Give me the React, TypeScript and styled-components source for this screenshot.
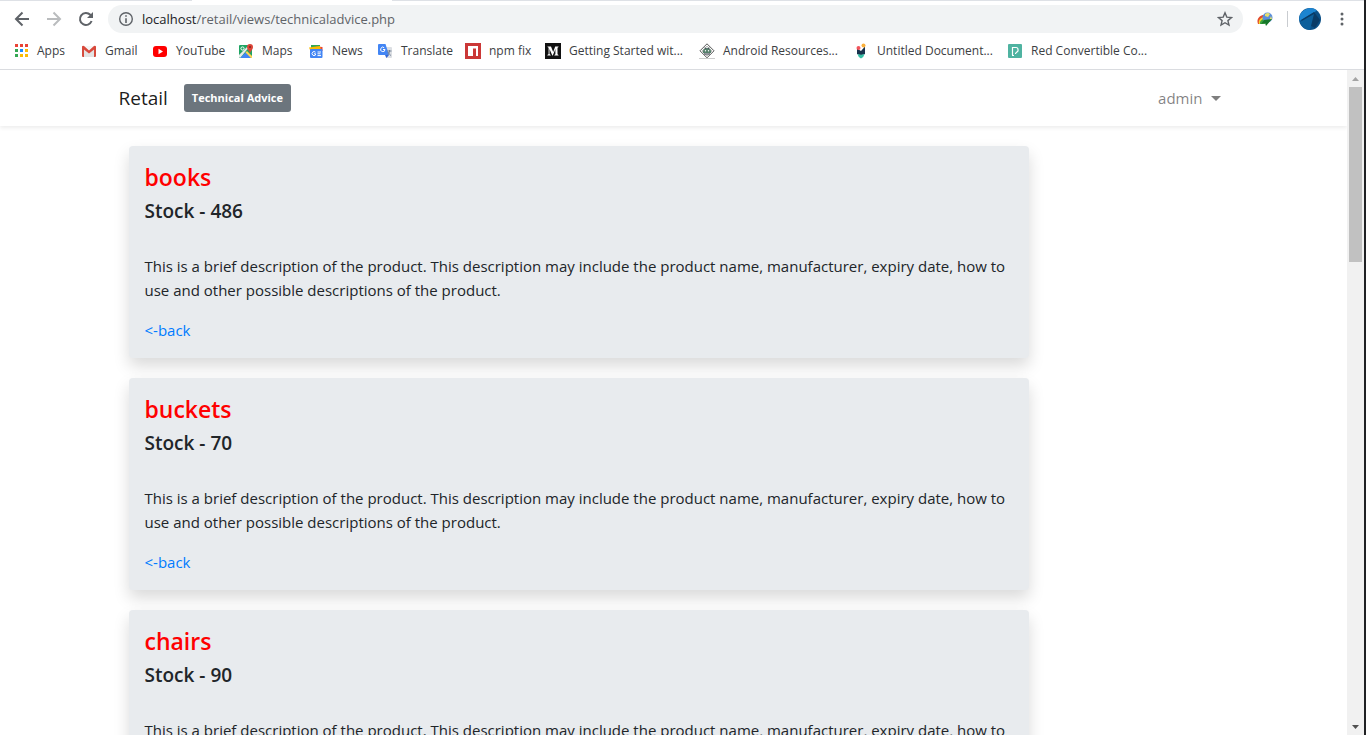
import React from "react";
import styled, { createGlobalStyle } from "styled-components";

const GlobalStyle = createGlobalStyle`
  *, *::before, *::after { box-sizing: border-box; }
  body {
    margin: 0;
    overflow: hidden;
    background: #fff;
    color: #212529;
    font-family: "Open Sans", "Noto Sans", sans-serif;
  }
`;

const Screen = styled.div`
  display: flex;
  flex-direction: column;
  height: 100vh;
  border-right: 2px solid #202124;
`;

const TabEdge = styled.div`
  display: grid;
  grid-template-columns: 192px 200px 1fr;
  height: 1px;
  flex: none;
`;

const EdgeLine = styled.div<{ $on?: boolean }>`
  background: ${(p) => (p.$on ? "#dee1e6" : "#fff")};
`;

const Toolbar = styled.header`
  display: flex;
  align-items: center;
  flex: none;
  height: 36px;
  padding: 0 12px;
`;

const IconButton = styled.button<{ $size?: number }>`
  display: flex;
  align-items: center;
  justify-content: center;
  flex: none;
  width: ${(p) => p.$size ?? 20}px;
  height: ${(p) => p.$size ?? 20}px;
  padding: 0;
  border: 0;
  background: none;
`;

const NavButtons = styled.div`
  display: flex;
  gap: 12px;
  margin-right: 12px;
`;

const AddressBar = styled.div`
  display: flex;
  align-items: center;
  flex: 1;
  height: 28px;
  padding: 0 8px 0 10px;
  border-radius: 14px;
  background: #f1f3f4;
`;

const Address = styled.div`
  flex: 1;
  margin-left: 8px;
  font-size: 13px;
  line-height: 20px;
  color: #5f6368;
  b { font-weight: 400; color: #202124; }
`;

const ToolbarEnd = styled.div`
  display: flex;
  align-items: center;
  margin-left: 12px;
`;

const Divider = styled.span`
  width: 1px;
  height: 16px;
  margin: 0 11px 0 12px;
  background: #c9ccd0;
`;

const MenuSlot = styled.div`
  margin-left: 11px;
`;

const Bookmarks = styled.nav`
  display: flex;
  align-items: center;
  flex: none;
  height: 33px;
  padding: 0 0 4px 13px;
  border-bottom: 1px solid #dadce0;
`;

const Bookmark = styled.a<{ $width: number }>`
  display: flex;
  align-items: center;
  gap: 8px;
  flex: none;
  width: ${(p) => p.$width}px;
  font-size: 12px;
  line-height: 16px;
  white-space: nowrap;
  text-decoration: none;
  color: #3c4043;
  svg { flex: none; }
`;

const Viewport = styled.div`
  display: flex;
  flex: 1;
  min-height: 0;
`;

const Page = styled.div`
  flex: 1;
  min-width: 0;
  overflow: hidden;
`;

const Container = styled.div`
  max-width: 1140px;
  margin: 0 auto;
  padding: 0 15px;
`;

const Navbar = styled.nav`
  height: 56px;
  box-shadow: 0 2px 4px rgba(0, 0, 0, 0.075);
`;

const NavInner = styled(Container)`
  display: flex;
  align-items: center;
  height: 100%;
`;

const Brand = styled.a`
  margin-right: 16px;
  font-size: 19px;
  font-weight: 400;
  line-height: 30px;
  text-decoration: none;
  color: rgba(0, 0, 0, 0.9);
`;

const AdviceButton = styled.button`
  height: 28px;
  padding: 0 8px;
  border: 0;
  border-radius: 3px;
  background: #6c757d;
  color: #fff;
  font-family: inherit;
  font-size: 11px;
  font-weight: 700;
  line-height: 20px;
`;

const UserMenu = styled.button`
  display: flex;
  align-items: center;
  gap: 8px;
  margin-left: auto;
  padding: 0 8px;
  border: 0;
  background: none;
  color: rgba(0, 0, 0, 0.5);
  font-family: inherit;
  font-size: 15px;
  line-height: 24px;
`;

const Caret = styled.span`
  border: 5px solid transparent;
  border-top-color: currentColor;
  border-bottom: 0;
`;

const Products = styled.main`
  display: flex;
  flex-direction: column;
  gap: 20px;
  padding: 20px 10px;
`;

const Card = styled.article`
  max-width: 900px;
  padding: 16px;
  border-radius: 4px;
  background: #e8ebee;
  box-shadow: 0 8px 16px rgba(0, 0, 0, 0.15);
`;

const ProductName = styled.h4`
  margin: 0 0 6px;
  font-size: 23px;
  font-weight: 600;
  line-height: 30px;
  color: #f00;
`;

const Stock = styled.h5`
  margin: 0 0 30px;
  font-size: 19px;
  font-weight: 600;
  line-height: 26px;
`;

const Description = styled.p`
  margin: 0 0 16px;
  font-size: 15px;
  line-height: 24px;
`;

const BackLink = styled.a`
  display: block;
  font-size: 15px;
  line-height: 24px;
  text-decoration: none;
  color: #007bff;
`;

const Scrollbar = styled.div`
  display: flex;
  flex-direction: column;
  align-items: center;
  flex: none;
  width: 17px;
  background: #f1f1f1;
`;

const ScrollArrow = styled.div`
  display: flex;
  align-items: center;
  justify-content: center;
  height: 17px;
`;

const Thumb = styled.div`
  width: 13px;
  flex: 5;
  background: #c1c1c1;
`;

const Spacer = styled.div`
  flex: 13;
`;

const Icon = ({ children, size = 16 }: { children: React.ReactNode; size?: number }) => (
  <svg width={size} height={size} viewBox={`0 0 ${size} ${size}`} aria-hidden="true">
    {children}
  </svg>
);

const AppsIcon = () => {
  const colors = ["#ea4335", "#ea4335", "#ea4335", "#34a853", "#1a8cff", "#fbbc04", "#34a853", "#fbbc04", "#fbbc04"];
  return (
    <Icon>
      {colors.map((c, i) => (
        <rect key={i} x={2 + (i % 3) * 5} y={1 + Math.floor(i / 3) * 5} width="3" height="3" fill={c} />
      ))}
    </Icon>
  );
};

const GmailIcon = () => (
  <Icon>
    <path d="M2 3h12v11H2z" fill="#e3e3e3" />
    <path d="M3 3h10L8 8z" fill="#f5f5f5" />
    <path d="M1 4v9q0 1 1 1h1V5.500zM15 4v9q0 1-1 1h-1V5.500z" fill="#d54b3d" />
    <path d="M1 3.500Q1.500 2.500 3 3l5 4.500L13 3q1.500-.5 2 .5v1.500L8 10.500 1 5z" fill="#d9483b" />
  </Icon>
);

const YouTubeIcon = () => (
  <Icon>
    <rect x="1" y="3" width="14" height="11" rx="3" fill="#f00" />
    <path d="M6.500 5.700v5.600L11 8.500z" fill="#fff" />
  </Icon>
);

const MapsIcon = () => (
  <Icon>
    <rect x="1" y="2" width="13" height="13" rx="1" fill="#1fa463" />
    <path d="M2 15 8 9l6 6z" fill="#4285f4" />
    <path d="M1 14V12L11 2h2L2 15z" fill="#e8e8e8" />
    <path d="M7.500 9.500 9 8l5 5v2h-1z" fill="#ffd54f" />
    <circle cx="4.500" cy="5.500" r="1.600" fill="none" stroke="#fff" />
    <path d="M12 11c0-3-3-4-3-7a3 3 0 0 1 6 0c0 3-3 4-3 7z" fill="#db4437" />
    <circle cx="12" cy="4" r="1" fill="#7d261e" />
  </Icon>
);

const NewsIcon = () => (
  <Icon>
    <path d="M3 2h9v5H3z" fill="#34a853" />
    <path d="M8 3.500 14.500 4v4H8z" fill="#ea4335" />
    <path d="M1 4.500 12 3l1 4H2z" fill="#fbbc04" />
    <rect x="2" y="6" width="12.500" height="9" rx="1" fill="#4285f4" />
    <path d="M7.500 9.200A2 2 0 1 0 7.500 12V10.800H6M9.500 9h3.500M9.500 10.800h3M9.500 12.600h3.500" fill="none" stroke="#fff" />
  </Icon>
);

const TranslateIcon = () => (
  <Icon>
    <path d="M6 4h8q1 0 1 1v9q0 1-1 1H9z" fill="#dcdfe3" />
    <path d="M2 1h6.500L12 12H2q-1 0-1-1V2q0-1 1-1z" fill="#4285f4" />
    <path d="M8 12h4l-2.500 3z" fill="#3367d6" />
    <path d="M8 6.500H6M8 6.500a2.200 2.200 0 1 1-.8-1.800" fill="none" stroke="#fff" />
    <path d="M10 8h4.500M12.500 7v1c0 2-1 3-2 4M11 9c1 2 2 3 3 3.500" fill="none" stroke="#718096" />
  </Icon>
);

const NpmIcon = () => (
  <Icon>
    <path d="M0 0h16v16H0z" fill="#cb3837" />
    <path d="M3 3h10v10h-2V5.500H8V13H3z" fill="#fff" />
  </Icon>
);

const MediumIcon = () => (
  <Icon>
    <path d="M0 0h16v16H0z" fill="#111" />
    <path d="M2.500 3.500H6L8.200 9l2-5.500h3.300V4l-1 .7v6.600l1 .7v.5H9.400V12l1-.7V6L7.800 12.500h-.5L4.500 6v5l1.200 1v.5H2.400V12l1.200-1V4.700l-1-.7z" fill="#fff" />
  </Icon>
);

const AndroidIcon = () => (
  <Icon>
    <path d="m8 .8 7 7-7 7-7-7z" fill="#fff" stroke="#555" />
    <path d="m8 3 5 5-5 5-5-5z" fill="#dfe6e2" stroke="#999" strokeWidth=".6" />
    <path d="M4 8.500a4 3.500 0 0 1 8 0v1.500H4z" fill="#57806c" />
    <path d="M6 4.500l1 1.500M10 4.500 9 6M5 11h6" stroke="#445" />
    <circle cx="6.500" cy="7.700" r=".7" fill="#fff" />
    <circle cx="9.500" cy="7.700" r=".7" fill="#fff" />
    <path d="M0 15.500h16" stroke="#ccc" />
  </Icon>
);

const DocumentIcon = () => (
  <Icon>
    <path d="M4 5.500 8 8l4-4.500V11q-4 2-8 0z" fill="#19324d" />
    <circle cx="5.500" cy="5" r="2" fill="#f2545b" />
    <circle cx="10.500" cy="2.500" r="2" fill="#fbb03b" />
    <path d="M4.500 11q3.500 1.500 7 0Q11 14 8 15.500 5 14 4.500 11z" fill="#35bfa4" />
  </Icon>
);

const RedIcon = () => (
  <Icon>
    <rect x="1" y="1" width="14" height="14" rx="1" fill="#4fb3a1" />
    <path d="M5.500 12V4.500h3.500q2 0 2 2V8L8.500 10.500H8M7 12.500H5" fill="none" stroke="#fff" strokeWidth="1.200" />
  </Icon>
);

const bookmarks = [
  { label: "Apps", icon: <AppsIcon />, width: 68 },
  { label: "Gmail", icon: <GmailIcon />, width: 71 },
  { label: "YouTube", icon: <YouTubeIcon />, width: 86 },
  { label: "Maps", icon: <MapsIcon />, width: 70 },
  { label: "News", icon: <NewsIcon />, width: 69 },
  { label: "Translate", icon: <TranslateIcon />, width: 88 },
  { label: "npm fix", icon: <NpmIcon />, width: 80 },
  { label: "Getting Started wit...", icon: <MediumIcon />, width: 154 },
  { label: "Android Resources...", icon: <AndroidIcon />, width: 154 },
  { label: "Untitled Document...", icon: <DocumentIcon />, width: 154 },
  { label: "Red Convertible Co...", icon: <RedIcon />, width: 154 },
];

const products = [
  { name: "books", stock: 486 },
  { name: "buckets", stock: 70 },
  { name: "chairs", stock: 90 },
];

export default function App() {
  return (
    <>
      <GlobalStyle />
      <Screen>
        <TabEdge>
          <EdgeLine $on />
          <EdgeLine />
          <EdgeLine $on />
        </TabEdge>
        <Toolbar>
          <NavButtons>
            <IconButton aria-label="Back">
              <Icon><path d="M15 8H2M8.500 1.500 2 8l6.500 6.500" fill="none" stroke="#5f6368" strokeWidth="2" /></Icon>
            </IconButton>
            <IconButton aria-label="Forward">
              <Icon><path d="M1 8h13M7.500 1.500 14 8l-6.500 6.500" fill="none" stroke="#babcbe" strokeWidth="2" /></Icon>
            </IconButton>
            <IconButton aria-label="Reload">
              <Icon>
                <path d="M13.600 10A6 6 0 1 1 12.300 3.800L14 5.500" fill="none" stroke="#5f6368" strokeWidth="2" />
                <path d="M15 1v6H9z" fill="#5f6368" />
              </Icon>
            </IconButton>
          </NavButtons>
          <AddressBar>
            <Icon>
              <circle cx="8" cy="8" r="6.300" fill="none" stroke="#5f6368" strokeWidth="1.400" />
              <path d="M7.200 7.200h1.600V12H7.200zM7.200 4.200h1.600v1.600H7.200z" fill="#5f6368" />
            </Icon>
            <Address><b>localhost</b>/retail/views/technicaladvice.php</Address>
            <IconButton aria-label="Bookmark this page">
              <Icon>
                <path d="m8 1.800 1.800 4.300 4.700.4-3.600 3.100 1.100 4.500L8 11.700l-4 2.400 1.100-4.500L1.500 6.500l4.700-.4z" fill="none" stroke="#5f6368" strokeWidth="1.400" />
              </Icon>
            </IconButton>
          </AddressBar>
          <ToolbarEnd>
            <IconButton aria-label="Download manager">
              <Icon>
                <path d="M1 13C-1 8 3 4 7 4l1 3C5 7 4 9 5 13z" fill="#e34a2c" />
                <path d="M2 13C1 9 4 6 8 6v2C6 8 4 10 5 13z" fill="#f6d52d" />
                <path d="M3 13c-.5-3 2-5 5-5v5z" fill="#3ca53c" />
                <circle cx="10.500" cy="6.500" r="5" fill="#5b8fdc" />
                <path d="M8 3q3-2 5 0l-2 3-3-1zM14 5l1 3-3 2z" fill="#e5df72" />
                <path d="m7 9 8-1-6 7-1-3-4 1z" fill="#16772a" />
              </Icon>
            </IconButton>
            <Divider />
            <IconButton $size={22} aria-label="Profile">
              <Icon size={22}>
                <circle cx="11" cy="11" r="11" fill="#0b4f86" />
                <path d="M0.500 13A11 11 0 0 1 18 2.500L14 5z" fill="#1c84d0" />
                <path d="m2 12 13-8 6 8-5 8z" fill="#0a3b66" />
                <path d="M1 14 15 6l-4 16Q3 21 1 14z" fill="#0c5f9b" />
              </Icon>
            </IconButton>
            <MenuSlot>
              <IconButton aria-label="Menu">
                <Icon>
                  <circle cx="8" cy="3" r="1.500" fill="#5f6368" />
                  <circle cx="8" cy="8" r="1.500" fill="#5f6368" />
                  <circle cx="8" cy="13" r="1.500" fill="#5f6368" />
                </Icon>
              </IconButton>
            </MenuSlot>
          </ToolbarEnd>
        </Toolbar>
        <Bookmarks>
          {bookmarks.map((b) => (
            <Bookmark key={b.label} href="#" $width={b.width}>
              {b.icon}
              {b.label}
            </Bookmark>
          ))}
        </Bookmarks>
        <Viewport>
          <Page>
            <Navbar>
              <NavInner>
                <Brand href="#">Retail</Brand>
                <AdviceButton>Technical Advice</AdviceButton>
                <UserMenu>admin <Caret /></UserMenu>
              </NavInner>
            </Navbar>
            <Container>
              <Products>
                {products.map((p) => (
                  <Card key={p.name}>
                    <ProductName>{p.name}</ProductName>
                    <Stock>Stock - {p.stock}</Stock>
                    <Description>
                      This is a brief description of the product. This description may include the product name, manufacturer, expiry date, how to use and other possible descriptions of the product.
                    </Description>
                    <BackLink href="#">&lt;-back</BackLink>
                  </Card>
                ))}
              </Products>
            </Container>
          </Page>
          <Scrollbar>
            <ScrollArrow>
              <svg width="7" height="4" aria-hidden="true"><path d="M0 4 3.500 0 7 4z" fill="#a3a3a3" /></svg>
            </ScrollArrow>
            <Thumb />
            <Spacer />
            <ScrollArrow>
              <svg width="7" height="4" aria-hidden="true"><path d="M0 0h7L3.500 4z" fill="#505050" /></svg>
            </ScrollArrow>
          </Scrollbar>
        </Viewport>
      </Screen>
    </>
  );
}
